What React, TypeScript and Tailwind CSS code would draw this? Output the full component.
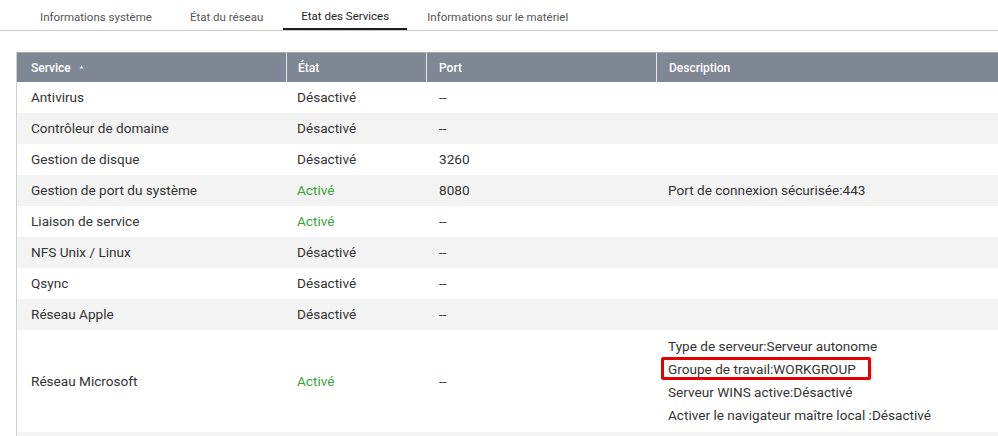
import React from "react";

const rows: { name: string; on: boolean; port: string; desc?: string }[] = [
  { name: "Antivirus", on: false, port: "--" },
  { name: "Contrôleur de domaine", on: false, port: "--" },
  { name: "Gestion de disque", on: false, port: "3260" },
  { name: "Gestion de port du système", on: true, port: "8080", desc: "Port de connexion sécurisée:443" },
  { name: "Liaison de service", on: true, port: "--" },
  { name: "NFS Unix / Linux", on: false, port: "--" },
  { name: "Qsync", on: false, port: "--" },
  { name: "Réseau Apple", on: false, port: "--" },
];

const tabs = ["Informations système", "État du réseau", "Etat des Services", "Informations sur le matériel"];

export default function App() {
  return (
    <div
      className="w-[998px] h-[436px] overflow-hidden bg-white text-[#333]"
      style={{ fontFamily: "Roboto, 'Noto Sans', sans-serif" }}
    >
      <div className="h-[31px] border-b border-[#c9c9c9] flex pl-[22px] gap-[2px]">
        {tabs.map((t, i) => (
          <div
            key={t}
            className={
              i === 2
                ? "h-[30px] px-[18px] pt-[5px] flex items-center text-[11.5px] text-[#1e1e1e] border-b-2 border-[#1e1e1e]"
                : "h-[30px] px-[18px] pt-[6px] flex items-center text-[11.5px] text-[#555]"
            }
          >
            {t}
          </div>
        ))}
      </div>

      <div className="ml-[16px] mt-[21px] border-l border-[#cfcfcf] w-[1000px]">
        <div className="grid grid-cols-[269px_140px_230px_1fr] h-[30px] bg-[#7f8694] text-white text-[12px] font-medium border-t border-[#a9aeb8]">
          <div className="flex items-center pl-[14px] gap-[8px]">
            <span>Service</span>
            <svg width="5" height="4" viewBox="0 0 5 4" className="mt-[-2px]">
              <path d="M2.5 0.5 L4.5 3.5 L0.5 3.5 Z" fill="#e8eaee" />
            </svg>
          </div>
          <div className="flex items-center pl-[11px] border-l border-[#e4e6ea]">État</div>
          <div className="flex items-center pl-[12px] border-l border-[#e4e6ea]">Port</div>
          <div className="flex items-center pl-[12px] border-l border-[#e4e6ea]">Description</div>
        </div>

        {rows.map((r, i) => (
          <div
            key={r.name}
            className={
              "grid grid-cols-[269px_140px_230px_1fr] h-[31px] items-center text-[13.6px] " +
              (i % 2 === 1 ? "bg-[#f3f3f3]" : "bg-white")
            }
          >
            <div className="pl-[14px]">{r.name}</div>
            <div className={r.on ? "pl-[11px] text-[#3aa63a]" : "pl-[11px]"}>{r.on ? "Activé" : "Désactivé"}</div>
            <div className="pl-[13px]">{r.port}</div>
            <div className="pl-[12px]">{r.desc ?? ""}</div>
          </div>
        ))}

        <div className="grid grid-cols-[269px_140px_230px_1fr] h-[102px] items-center text-[13.6px] bg-white">
          <div className="pl-[14px]">Réseau Microsoft</div>
          <div className="pl-[11px] text-[#3aa63a]">Activé</div>
          <div className="pl-[13px]">--</div>
          <div className="pl-[12px] leading-[23px] flex flex-col items-start">
            <span>Type de serveur:Serveur autonome</span>
            <span className="relative">
              Groupe de travail:WORKGROUP
              <span className="absolute left-[-7px] right-[-15px] top-[-1px] bottom-[1px] border-[3px] border-[#e30000] rounded-[2px]" />
            </span>
            <span>Serveur WINS active:Désactivé</span>
            <span>Activer le navigateur maître local :Désactivé</span>
          </div>
        </div>
        <div className="h-[31px] bg-[#f3f3f3]" />
      </div>
    </div>
  );
}
